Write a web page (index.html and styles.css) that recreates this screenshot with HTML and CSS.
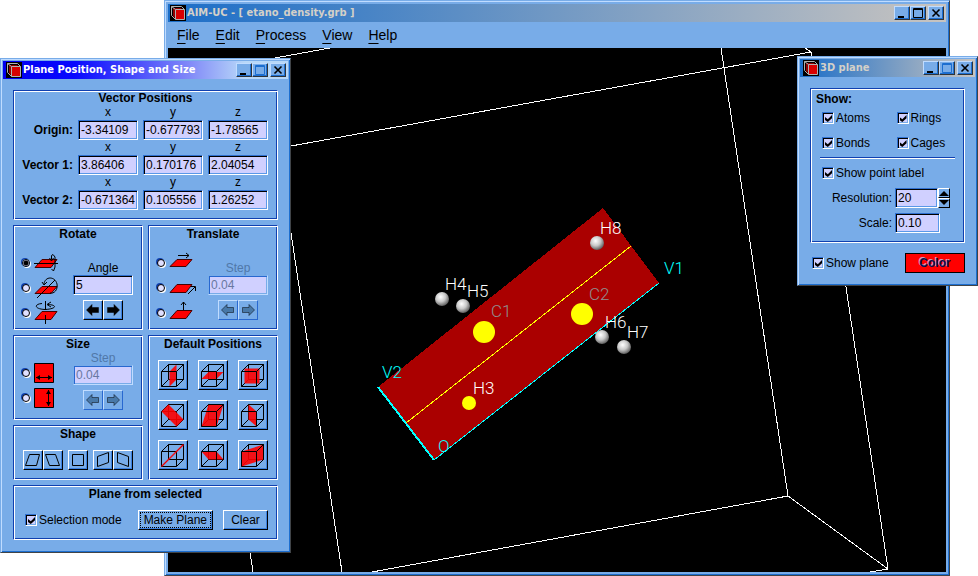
FILE: index.html
```
<!DOCTYPE html>
<html lang="en">
<head>
  <meta charset="UTF-8" />
  <meta name="viewport" content="width=device-width, initial-scale=1.0"/>
  <title>AIM-UC - [ etano_density.grb ]</title>
  <link rel="stylesheet" href="styles.css">
</head>
<body>
  <!-- Shared icon shapes -->
  <svg class="defs" aria-hidden="true">
    <symbol id="app" viewBox="0 0 16 16">
      <rect width="16" height="16" fill="#000"/>
      <path d="M3 3h8l3 3v8H6L3 11z" fill="#900000"/>
      <path d="M6 5h8v9H6z" fill="#d80000"/>
      <path d="M1.500 1.500h10l3 3v10h-9l-4-4zM1.500 1.500l4 3v10M5.500 4.500h9" fill="none" stroke="#b0b0b0"/>
    </symbol>
    <symbol id="back" viewBox="1 1 28 28">
      <path d="M10.500 4.500h15v15h-15zM3.500 26.500l7-7" fill="none" stroke="#000"/>
    </symbol>
    <symbol id="front" viewBox="1 1 28 28">
      <path d="M3.500 11.500h15v15h-15zM3.500 11.500l7-7h15v15l-7 7M18.500 11.500l7-7" fill="none" stroke="#000"/>
    </symbol>
    <symbol id="left" viewBox="0 0 18 18">
      <path d="M2.500 9L8 3.500V6.500H14.500V11.500H8V14.500z" fill="currentColor" stroke="#000" stroke-opacity=".5"/>
    </symbol>
    <symbol id="right" viewBox="0 0 18 18">
      <path d="M15.500 9L10 3.500V6.500H3.500V11.500H10V14.500z" fill="currentColor" stroke="#000" stroke-opacity=".5"/>
    </symbol>
    <symbol id="min" viewBox="0 0 14 12"><path d="M3 9h6v2H3z"/></symbol>
    <symbol id="max" viewBox="0 0 14 12">
      <path d="M2.500 1.500h9v9h-9zM2 2.500h10" fill="none" stroke="currentColor"/>
    </symbol>
    <symbol id="close" viewBox="0 0 14 12">
      <path d="M3.500 2.500l7 7M10.500 2.500l-7 7" stroke="#000" stroke-width="1.600"/>
    </symbol>
  </svg>

  <main class="desktop">
    <section class="window main-window">
      <header class="titlebar">
        <svg class="app-icon"><use href="#app"/></svg>
        <h1>AIM-UC - [ etano_density.grb ]</h1>
        <button class="win-btn" aria-label="Minimize"><svg><use href="#min"/></svg></button>
        <button class="win-btn" aria-label="Maximize"><svg><use href="#max"/></svg></button>
        <button class="win-btn close" aria-label="Close"><svg><use href="#close"/></svg></button>
      </header>
      <nav class="menu">
        <button><u>F</u>ile</button>
        <button><u>E</u>dit</button>
        <button><u>P</u>rocess</button>
        <button><u>V</u>iew</button>
        <button><u>H</u>elp</button>
      </nav>
      <svg class="scene" viewBox="168 48 778 524" preserveAspectRatio="xMinYMin slice">
        <defs>
          <radialGradient id="ball" cx="0.4" cy="0.35" r="0.7">
            <stop offset="0" stop-color="#fff"/>
            <stop offset="0.5" stop-color="#c8c8c8"/>
            <stop offset="1" stop-color="#505050"/>
          </radialGradient>
        </defs>
        <g class="box-lines">
          <path d="M275 58L330 48M291 146L811 52L805 48M811 52L888 569L870 572"/>
          <path d="M721 48L788 496L888 569M788 496L372 572M291 233L342 572M250 552L253 572"/>
        </g>
        <g class="plane">
          <path d="M603 208L659 283L434 460L378 387z" fill="#aa0000"/>
          <path d="M631 246L406 423" stroke="#ffff00"/>
          <path d="M434 460L659 283" stroke="#00ffff"/>
          <path d="M378 387L434 460" stroke="#00ffff" stroke-width="2"/>
        </g>
        <g fill="url(#ball)">
          <circle cx="597" cy="243" r="7"/>
          <circle cx="442" cy="299" r="7"/>
          <circle cx="463" cy="306" r="7"/>
          <circle cx="602" cy="337" r="7"/>
          <circle cx="624" cy="347" r="7"/>
        </g>
        <g fill="#ffff00">
          <circle cx="484" cy="332" r="11"/>
          <circle cx="582" cy="314" r="11"/>
          <circle cx="469" cy="403" r="7"/>
        </g>
        <g class="labels">
          <text x="600" y="234">H8</text>
          <text x="445" y="290">H4</text>
          <text x="467" y="297">H5</text>
          <text x="605" y="328">H6</text>
          <text x="627" y="338">H7</text>
          <text x="473" y="394">H3</text>
          <text class="carbon" x="491" y="317">C1</text>
          <text class="carbon" x="589" y="300">C2</text>
          <text class="axis" x="664" y="274">V1</text>
          <text class="axis" x="382" y="378">V2</text>
          <text class="axis" x="438" y="452">O</text>
        </g>
      </svg>
    </section>

    <section class="window position-window">
      <header class="titlebar active">
        <svg class="app-icon"><use href="#app"/></svg>
        <h2>Plane Position, Shape and Size</h2>
        <button class="win-btn" aria-label="Minimize"><svg><use href="#min"/></svg></button>
        <button class="win-btn" aria-label="Maximize" disabled><svg><use href="#max"/></svg></button>
        <button class="win-btn close" aria-label="Close"><svg><use href="#close"/></svg></button>
      </header>
      <div class="window-body">
        <section class="group vector-group">
          <h3>Vector Positions</h3>
          <div class="vectors">
            <span></span><span>x</span><span>y</span><span>z</span>
            <label for="ox">Origin:</label>
            <input class="field" id="ox" type="text" value="-3.34109">
            <input class="field" aria-label="Origin y" type="text" value="-0.677793">
            <input class="field" aria-label="Origin z" type="text" value="-1.78565">
            <span></span><span>x</span><span>y</span><span>z</span>
            <label for="v1x">Vector 1:</label>
            <input class="field" id="v1x" type="text" value="3.86406">
            <input class="field" aria-label="Vector 1 y" type="text" value="0.170176">
            <input class="field" aria-label="Vector 1 z" type="text" value="2.04054">
            <span></span><span>x</span><span>y</span><span>z</span>
            <label for="v2x">Vector 2:</label>
            <input class="field" id="v2x" type="text" value="-0.671364">
            <input class="field" aria-label="Vector 2 y" type="text" value="0.105556">
            <input class="field" aria-label="Vector 2 z" type="text" value="1.26252">
          </div>
        </section>

        <div class="columns">
          <div class="column">
            <section class="group">
              <h3>Rotate</h3>
              <div class="op op-tall">
                <div class="radios">
                  <label><input type="radio" name="rotate" aria-label="Rotate around long axis" checked>
                    <svg viewBox="0 0 24 24"><path d="M1 16.500L8 8.500H23L17 16.500z" fill="#f00" stroke="#400"/><path d="M0 12.500H24M17.500 8V4.500L19 3.500L21 6V16L19.500 20L17.500 18M17.500 10L15.500 7M17.500 10L19.500 7" fill="none" stroke="#000"/></svg></label>
                  <label><input type="radio" name="rotate" aria-label="Rotate around short axis">
                    <svg viewBox="0 0 24 24"><path d="M1 17.500L8 10.500H23L17 17.500z" fill="#f00" stroke="#400"/><path d="M3 22L21 4M10 8C11 0 21 0 23 8C24 14 20 18 16 17M10 9L8 6M10 9L13 6" fill="none" stroke="#000"/></svg></label>
                  <label><input type="radio" name="rotate" aria-label="Rotate around normal">
                    <svg viewBox="0 0 24 24"><path d="M1 18.500L8 10.500H23L17 18.500z" fill="#f00" stroke="#400"/><path d="M11.500 0V9M11.500 14V23M8 2.500C0 3 0 8 11 8.500C22 8 24 4 14 3.500M13 3.500L17 1M13 3.500L17 6" fill="none" stroke="#000"/></svg></label>
                </div>
                <div class="op-side">
                  <label for="angle">Angle</label>
                  <input class="field" id="angle" type="text" value="5">
                  <div class="arrows">
                    <button class="btn" aria-label="Rotate back"><svg><use href="#left"/></svg></button>
                    <button class="btn" aria-label="Rotate forward"><svg><use href="#right"/></svg></button>
                  </div>
                </div>
              </div>
            </section>

            <section class="group">
              <h3>Size</h3>
              <div class="op">
                <div class="radios">
                  <label><input type="radio" name="size" aria-label="Width">
                    <svg class="square" viewBox="0 0 20 20"><path d="M.5.5h19v19H.5z" fill="#f00" stroke="#000"/><path d="M2 14.500H18" stroke="#000"/><path d="M2 14.500L6 12v5zM18 14.500L14 12v5z"/></svg></label>
                  <label><input type="radio" name="size" aria-label="Height">
                    <svg class="square" viewBox="0 0 20 20"><path d="M.5.5h19v19H.5z" fill="#f00" stroke="#000"/><path d="M14.500 2V18" stroke="#000"/><path d="M14.500 2L12 6h5zM14.500 18L12 14h5z"/></svg></label>
                </div>
                <div class="op-side disabled">
                  <label for="size-step">Step</label>
                  <input class="field" id="size-step" type="text" value="0.04" disabled>
                  <div class="arrows">
                    <button class="btn" aria-label="Shrink" disabled><svg><use href="#left"/></svg></button>
                    <button class="btn" aria-label="Grow" disabled><svg><use href="#right"/></svg></button>
                  </div>
                </div>
              </div>
            </section>

            <section class="group">
              <h3>Shape</h3>
              <div class="shapes">
                <div>
                  <button class="btn" aria-label="Skew right"><svg viewBox="0 0 18 18"><path d="M5.500 3.500H15.500L12.500 14.500H1.500z"/></svg></button>
                  <button class="btn" aria-label="Skew left"><svg viewBox="0 0 18 18"><path d="M1.500 3.500H11.500L15.500 14.500H5.500z"/></svg></button>
                </div>
                <div>
                  <button class="btn" aria-label="Square"><svg viewBox="0 0 18 18"><path d="M3.500 3.500H14.500V14.500H3.500z"/></svg></button>
                </div>
                <div>
                  <button class="btn" aria-label="Skew up"><svg viewBox="0 0 18 18"><path d="M3.500 5.500L14.500 1.500V11.500L3.500 15.500z"/></svg></button>
                  <button class="btn" aria-label="Skew down"><svg viewBox="0 0 18 18"><path d="M3.500 1.500L14.500 5.500V15.500L3.500 11.500z"/></svg></button>
                </div>
              </div>
            </section>
          </div>

          <div class="column">
            <section class="group">
              <h3>Translate</h3>
              <div class="op op-tall">
                <div class="radios">
                  <label><input type="radio" name="translate" aria-label="Along vector 1">
                    <svg viewBox="0 0 24 24"><path d="M1 15.500L8 8.500H23L17 15.500z" fill="#f00" stroke="#400"/><path d="M9 4.500H20M17 2L20 4.500L17 7" fill="none" stroke="#000"/></svg></label>
                  <label><input type="radio" name="translate" aria-label="Along vector 2">
                    <svg viewBox="0 0 28 24" class="wide"><path d="M1 16.500L8 8.500H23L17 16.500z" fill="#f00" stroke="#400"/><path d="M19 18L26 11M22 10.500H26.500V15" fill="none" stroke="#000"/></svg></label>
                  <label><input type="radio" name="translate" aria-label="Along normal">
                    <svg viewBox="0 0 24 24"><path d="M1 17.500L8 9.500H23L17 17.500z" fill="#f00" stroke="#400"/><path d="M14.500 9V1M12 4L14.500 1L17 4" fill="none" stroke="#000"/></svg></label>
                </div>
                <div class="op-side disabled">
                  <label for="move-step">Step</label>
                  <input class="field" id="move-step" type="text" value="0.04" disabled>
                  <div class="arrows">
                    <button class="btn" aria-label="Move back" disabled><svg><use href="#left"/></svg></button>
                    <button class="btn" aria-label="Move forward" disabled><svg><use href="#right"/></svg></button>
                  </div>
                </div>
              </div>
            </section>

            <section class="group">
              <h3>Default Positions</h3>
              <div class="cubes">
                <button class="btn" aria-label="Side plane"><svg><use href="#back"/><path d="M10.500 10.500L17.500 3.500V18.500L10.500 25.500z"/><use href="#front"/></svg></button>
                <button class="btn" aria-label="Horizontal plane"><svg><use href="#back"/><path d="M2.500 18L9.500 11H24.500L17.500 18z"/><use href="#front"/></svg></button>
                <button class="btn" aria-label="Front plane"><svg><use href="#back"/><path d="M5.500 7.500H20.500V22.500H5.500z"/><use href="#front"/></svg></button>
                <button class="btn" aria-label="Falling diagonal"><svg><use href="#back"/><use href="#front"/><path d="M2.500 10.500L9.500 3.500L24.500 18.500L17.500 25.500z"/></svg></button>
                <button class="btn" aria-label="Leaning plane"><svg><use href="#back"/><path d="M9.500 3.500H24.500L17.500 25.500H2.500z"/><use href="#front"/></svg></button>
                <button class="btn" aria-label="Vertical diagonal"><svg><use href="#back"/><path d="M9.500 3.500L17.500 10.500V25.500L9.500 18.500z"/><use href="#front"/></svg></button>
                <button class="btn" aria-label="Rising diagonal"><svg><use href="#back"/><use href="#front"/><path d="M2 25L24 3L25 4L3 26z"/></svg></button>
                <button class="btn" aria-label="Tilted plane"><svg><use href="#back"/><path d="M2.500 10.500H17.500L24.500 18.500H9.500z"/><use href="#front"/></svg></button>
                <button class="btn" aria-label="Corner plane"><svg><use href="#back"/><path d="M2.500 10.500L24.500 3.500V18.500L2.500 25.500z"/><use href="#front"/></svg></button>
              </div>
            </section>
          </div>
        </div>

        <section class="group">
          <h3>Plane from selected</h3>
          <div class="selected-row">
            <label class="check"><input type="checkbox" checked>Selection mode</label>
            <button class="btn text-btn focused">Make Plane</button>
            <button class="btn text-btn">Clear</button>
          </div>
        </section>
      </div>
    </section>

    <section class="window plane-window">
      <header class="titlebar">
        <svg class="app-icon"><use href="#app"/></svg>
        <h2>3D plane</h2>
        <button class="win-btn" aria-label="Minimize"><svg><use href="#min"/></svg></button>
        <button class="win-btn" aria-label="Maximize" disabled><svg><use href="#max"/></svg></button>
        <button class="win-btn close" aria-label="Close"><svg><use href="#close"/></svg></button>
      </header>
      <div class="window-body">
        <section class="group show-group">
          <h3>Show:</h3>
          <div class="show-checks">
            <label class="check"><input type="checkbox" checked>Atoms</label>
            <label class="check"><input type="checkbox" checked>Rings</label>
            <label class="check"><input type="checkbox" checked>Bonds</label>
            <label class="check"><input type="checkbox" checked>Cages</label>
          </div>
          <div class="show-options">
            <label class="check"><input type="checkbox" checked>Show point label</label>
            <div class="option">
              <label for="resolution">Resolution:</label>
              <span class="spin">
                <input class="field" id="resolution" type="text" value="20">
                <span class="spin-btns">
                  <button aria-label="Increase"><svg viewBox="0 0 10 8"><path d="M0 7L5 2L10 7z"/></svg></button>
                  <button aria-label="Decrease"><svg viewBox="0 0 10 8"><path d="M0 1L5 6L10 1z"/></svg></button>
                </span>
              </span>
            </div>
            <div class="option">
              <label for="scale">Scale:</label>
              <span class="spin"><input class="field scale" id="scale" type="text" value="0.10"></span>
            </div>
          </div>
        </section>
        <div class="plane-row">
          <label class="check"><input type="checkbox" checked>Show plane</label>
          <button class="color-btn">Color</button>
        </div>
      </div>
    </section>
  </main>
</body>
</html>
```
FILE: styles.css
```
* {
  box-sizing: border-box;
}

body {
  margin: 0;
  background-color: #fff;
  font-family: "Liberation Sans", Arial, sans-serif;
  font-size: 12px;
  line-height: 14px;
  color: #000;
}

h1, h2, h3 {
  margin: 0;
  font-size: 12px;
}

button, input {
  margin: 0;
  padding: 0;
  font: inherit;
  color: inherit;
}

svg {
  display: block;
}

.defs {
  position: absolute;
  width: 0;
  height: 0;
}

.desktop {
  position: relative;
  height: 100vh;
  overflow: hidden;
}

/* Windows */
.window {
  position: absolute;
  padding: 2px;
  background-color: #78ace8;
  border: 1px solid;
  border-color: #78ace8 #404448 #404448 #78ace8;
  box-shadow: inset 1px 1px #c0dcff, inset -1px -1px #1c6ed0;
}

.main-window {
  top: 0;
  right: 28px;
  bottom: 0;
  left: 164px;
  padding: 3px;
  display: flex;
  flex-direction: column;
}

.position-window {
  top: 58px;
  left: 0;
  width: 291px;
}

.plane-window {
  top: 56px;
  right: 0;
  width: 181px;
}

.titlebar {
  display: flex;
  align-items: center;
  height: 18px;
  padding: 0 2px 0 3px;
  background: linear-gradient(to right, #1c6ec8, #c8c4c0);
  color: #d4d0c8;
}

.main-window .titlebar {
  padding-left: 2px;
}

.titlebar.active {
  background: linear-gradient(to right, #0000f0, #0808ff 25%, #8088f8 65%, #b8d8f8 85%);
  color: #fff;
}

.titlebar h1,
.titlebar h2 {
  flex: 1;
  padding-left: 1px;
  font-family: "DejaVu Sans Condensed", "DejaVu Sans", sans-serif;
  font-size: 11px;
  white-space: nowrap;
}

.app-icon {
  width: 16px;
  height: 16px;
}

.win-btn {
  width: 16px;
  height: 14px;
  background-color: #78ace8;
  border: 1px solid;
  border-color: #c0dcff #303438 #303438 #c0dcff;
  box-shadow: inset -1px -1px #1c6ed0;
  color: #000;
}

.win-btn svg {
  width: 14px;
  height: 12px;
}

.win-btn.close {
  margin-left: 2px;
}

.win-btn:disabled {
  color: #1c6ed0;
}

.menu {
  display: flex;
  height: 26px;
  padding-left: 1px;
}

.menu button {
  padding: 0 8px;
  background: none;
  border: none;
  font-size: 14px;
}

.menu u {
  text-underline-offset: 3px;
}

/* 3D view */
.scene {
  flex: 1;
  width: 100%;
  min-height: 0;
  background-color: #000;
}

.box-lines {
  fill: none;
  stroke: #fff;
  shape-rendering: crispEdges;
}

.plane {
  shape-rendering: crispEdges;
}

.labels {
  fill: #fff;
  font-family: Roboto, "Liberation Sans", sans-serif;
  font-size: 17px;
  font-weight: 300;
}

.labels .carbon {
  fill: #909090;
}

.labels .axis {
  fill: #00ffff;
}

/* Groups */
.window-body {
  display: flex;
  flex-direction: column;
  gap: 5px;
  padding: 11px 10px 10px;
}

.group {
  padding: 1px 9px 9px;
  border: 1px solid;
  border-color: #1040b0 #fff #fff #1040b0;
  box-shadow: inset 1px 1px #fff, inset -1px -1px #1040b0;
}

.group h3 {
  text-align: center;
}

.vector-group {
  padding-top: 0;
}

.columns {
  display: grid;
  grid-template-columns: 1fr 1fr;
  gap: 5px;
}

.column {
  display: flex;
  flex-direction: column;
  gap: 5px;
}

.vectors {
  display: grid;
  grid-template-columns: 1fr repeat(3, 60px);
  column-gap: 5px;
  align-items: center;
  margin-left: -8px;
}

.vectors span {
  height: 15px;
  text-align: center;
}

.vectors label {
  font-weight: bold;
  text-align: right;
  white-space: nowrap;
}

/* Controls */
.field {
  display: block;
  width: 60px;
  height: 20px;
  padding: 0 2px;
  background-color: #d0d0ff;
  border: 1px solid;
  border-color: #3070d0 #fff #fff #3070d0;
  box-shadow: inset 1px 1px #000, inset -1px -1px #5a98e8;
}

.field:disabled {
  color: #6878a0;
  border-color: #78ace8 #c0dcff #c0dcff #78ace8;
  box-shadow: inset 1px 1px #2868d0, inset -1px -1px #78ace8;
}

.btn {
  width: 20px;
  height: 20px;
  background-color: #78ace8;
  border: 1px solid;
  border-color: #fff #000 #000 #fff;
  box-shadow: inset -1px -1px #3a80e0;
}

.btn svg {
  width: 18px;
  height: 18px;
}

.btn:disabled {
  color: #4878a8;
  border-color: #c0dcff #2868d0 #2868d0 #c0dcff;
  box-shadow: none;
}

.text-btn {
  width: auto;
  min-width: 45px;
  padding: 0 5px;
}

.text-btn.focused {
  outline: 1px dotted #000;
  outline-offset: -3px;
}

.check {
  display: flex;
  align-items: center;
  gap: 2px;
  height: 20px;
  white-space: nowrap;
}

.check input {
  appearance: none;
  width: 12px;
  height: 12px;
  background-color: #d0d0ff;
  border: 1px solid;
  border-color: #3070d0 #fff #fff #3070d0;
  box-shadow: inset 1px 1px #000, inset -1px -1px #78ace8;
}

.check input:checked::before {
  content: "";
  display: block;
  width: 7px;
  height: 7px;
  margin: 2px;
  background-color: #000;
  clip-path: polygon(0 30%, 40% 60%, 100% 0, 100% 45%, 40% 100%, 0 70%);
}

.radios {
  display: flex;
  flex-direction: column;
}

.radios label {
  display: flex;
  align-items: center;
  gap: 4px;
  height: 25px;
}

.radios input {
  appearance: none;
  width: 8px;
  height: 8px;
  background-color: #e0e0ff;
  border: 1px solid #000;
  border-radius: 50%;
  box-shadow: -1px -1px #1040b0, 1px 1px #fff;
}

.radios input:checked {
  background: radial-gradient(#000 2px, #e0e0ff 3px);
}

.radios svg {
  width: 24px;
  height: 24px;
}

.radios svg.wide {
  width: 28px;
}

.radios svg.square {
  width: 20px;
  height: 20px;
}

/* Rotate, size and translate */
.op {
  display: flex;
  justify-content: space-between;
  align-items: flex-end;
  margin-left: -1px;
}

.op-tall {
  margin-top: 9px;
  margin-bottom: -5px;
}

.op-tall .op-side {
  margin-bottom: 5px;
}

.op-side {
  display: flex;
  flex-direction: column;
  align-items: center;
}

.op-side.disabled label {
  color: #5078a8;
}

.arrows {
  display: flex;
  margin-top: 5px;
}

.shapes {
  display: flex;
  justify-content: center;
  gap: 5px;
  margin-top: 9px;
}

.shapes div {
  display: flex;
}

.shapes path {
  fill: none;
  stroke: #000;
}

.cubes {
  display: grid;
  grid-template-columns: repeat(3, 30px);
  justify-content: center;
  gap: 10px;
  margin-top: 9px;
}

.cubes .btn {
  width: 30px;
  height: 30px;
}

.cubes .btn svg {
  width: 28px;
  height: 28px;
}

.cubes svg > path {
  fill: #f00;
  fill-opacity: 0.9;
}

.selected-row {
  display: flex;
  gap: 10px;
  margin-top: 9px;
}

.selected-row .check {
  flex: 1;
  padding-left: 2px;
}

/* 3D plane dialog */
.show-group h3 {
  padding: 2px 0 0;
  margin-left: -4px;
  text-align: left;
}

.show-checks {
  display: grid;
  grid-template-columns: 1fr 1fr;
  gap: 5px 18px;
  padding: 2px 2px 4px;
  border-bottom: 1px solid #1040b0;
  box-shadow: 0 1px #fff;
}

.show-options {
  display: flex;
  flex-direction: column;
  gap: 5px;
  padding: 5px 2px 0;
}

.option {
  display: flex;
  justify-content: flex-end;
  align-items: center;
  gap: 3px;
}

.spin {
  display: flex;
  width: 58px;
}

.spin .field {
  width: 43px;
}

.spin .field.scale {
  width: 45px;
}

.spin-btns {
  display: flex;
  flex-direction: column;
}

.spin-btns button {
  width: 12px;
  height: 10px;
  background-color: #78ace8;
  border: 1px solid;
  border-color: #fff #000 #000 #fff;
}

.spin-btns svg {
  width: 10px;
  height: 8px;
}

.plane-row {
  display: flex;
  justify-content: space-between;
  margin-top: 5px;
  padding-left: 2px;
}

.color-btn {
  width: 60px;
  height: 20px;
  background-color: #f00;
  border: 1px solid #000;
  color: #081050;
  font-weight: bold;
  text-shadow: -1px -1px #d0a0c0;
}
```
